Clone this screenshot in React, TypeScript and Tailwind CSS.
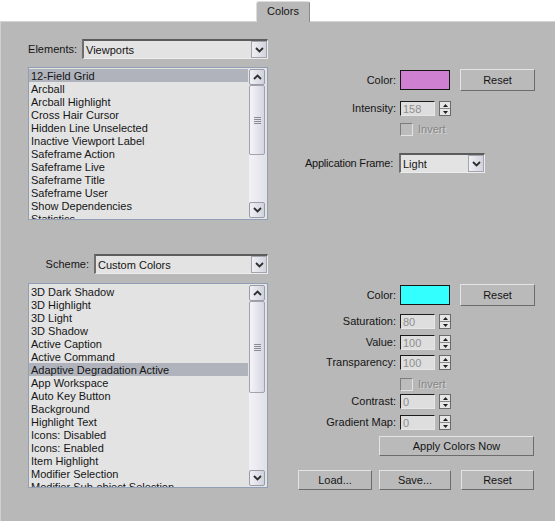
import React from 'react';

const viewportItems = [
  '12-Field Grid',
  'Arcball',
  'Arcball Highlight',
  'Cross Hair Cursor',
  'Hidden Line Unselected',
  'Inactive Viewport Label',
  'Safeframe Action',
  'Safeframe Live',
  'Safeframe Title',
  'Safeframe User',
  'Show Dependencies',
  'Statistics',
];

const schemeItems = [
  '3D Dark Shadow',
  '3D Highlight',
  '3D Light',
  '3D Shadow',
  'Active Caption',
  'Active Command',
  'Adaptive Degradation Active',
  'App Workspace',
  'Auto Key Button',
  'Background',
  'Highlight Text',
  'Icons: Disabled',
  'Icons: Enabled',
  'Item Highlight',
  'Modifier Selection',
  'Modifier Sub-object Selection',
];

function Chevron({ up = false }: { up?: boolean }) {
  return (
    <svg width="9" height="6" viewBox="0 0 9 6">
      <path
        d={up ? 'M1 5L4.5 1.5L8 5' : 'M1 1L4.5 4.5L8 1'}
        stroke="#2e2e2e"
        strokeWidth="1.8"
        fill="none"
      />
    </svg>
  );
}

function Dropdown({ value, className }: { value: string; className: string }) {
  return (
    <div
      className={`flex h-[20px] border-t-2 border-l-2 border-r border-b border-t-[#5c5c5c] border-l-[#6e6e6e] border-r-[#ececec] border-b-[#ececec] bg-[#e3e3e3] ${className}`}
    >
      <span className="flex-1 truncate pl-[2px] leading-[18px]">{value}</span>
      <span className="flex w-[16px] items-center justify-center border border-[#a4a4ae] bg-linear-to-r from-[#efeff4] to-[#d3d3de]">
        <Chevron />
      </span>
    </div>
  );
}

function ScrollBtn({ up = false }: { up?: boolean }) {
  return (
    <div className="flex h-[16px] items-center justify-center rounded-[2px] border border-[#9c9ca8] bg-linear-to-r from-[#f0f0f5] to-[#d2d2de]">
      <Chevron up={up} />
    </div>
  );
}

function ListBox({
  items,
  selected,
  height,
  thumb,
}: {
  items: string[];
  selected: number;
  height: string;
  thumb: string;
}) {
  return (
    <div className={`flex overflow-hidden border border-[#8e9fb6] bg-[#e3e3e3] ${height}`}>
      <div className="w-[219px] overflow-hidden pt-px">
        {items.map((item, i) => (
          <div
            key={item}
            className={`h-[13px] whitespace-nowrap pl-[2px] leading-[15px] ${i === selected ? 'bg-[#b0b3bc]' : ''}`}
          >
            {item}
          </div>
        ))}
      </div>
      {/* scrollbar */}
      <div className="ml-[1px] mr-[2px] flex w-[16px] flex-col py-px">
        <ScrollBtn up />
        <div className={`flex items-center justify-center rounded-[2px] border border-[#a2a2ae] bg-linear-to-r from-[#f4f4f8] to-[#d6d6e2] ${thumb}`}>
          <div className="flex flex-col gap-[1px]">
            <div className="h-px w-[7px] bg-[#8a8a94]" />
            <div className="h-px w-[7px] bg-[#8a8a94]" />
            <div className="h-px w-[7px] bg-[#8a8a94]" />
            <div className="h-px w-[7px] bg-[#8a8a94]" />
          </div>
        </div>
        <div className="flex-1 bg-linear-to-r from-[#f2f2f6] to-[#e2e2ea]" />
        <ScrollBtn />
      </div>
    </div>
  );
}

function Btn({ children, className }: { children: React.ReactNode; className: string }) {
  return (
    <div
      className={`flex items-center justify-center border border-t-[#e4e4e4] border-l-[#e4e4e4] border-r-[#6c6c6c] border-b-[#6c6c6c] bg-[#bababa] ${className}`}
    >
      {children}
    </div>
  );
}

function Spinner({ label, value, className = '' }: { label: string; value: string; className?: string }) {
  return (
    <div className={`flex h-[15px] items-center ${className}`}>
      <span className="w-[98px] text-right">{label}</span>
      <div className="ml-[4px] h-[15px] w-[35px] border-t border-l border-r border-b border-t-[#1c1c1c] border-l-[#1c1c1c] border-r-[#e6e6e6] border-b-[#e6e6e6] bg-[#dedede] pl-[2px] leading-[14px] text-[#8e8e8e]">
        {value}
      </div>
      <div className="ml-[4px] flex h-[15px] w-[12px] flex-col border border-[#6a6a6a] bg-[#e6e6e6]">
        <div className="flex flex-1 items-center justify-center border-b border-[#8a8a8a]">
          <svg width="5" height="3" viewBox="0 0 5 3">
            <path d="M0 3L2.5 0L5 3Z" fill="#1e1e1e" />
          </svg>
        </div>
        <div className="flex flex-1 items-center justify-center">
          <svg width="5" height="3" viewBox="0 0 5 3">
            <path d="M0 0L2.5 3L5 0Z" fill="#1e1e1e" />
          </svg>
        </div>
      </div>
    </div>
  );
}

function Invert({ className }: { className: string }) {
  return (
    <div className={`flex h-[13px] items-center pl-[102px] ${className}`}>
      <div className="h-[13px] w-[13px] border border-t-[#7c7c7c] border-l-[#7c7c7c] border-r-[#e2e2e2] border-b-[#e2e2e2] bg-[#bcbcbc]" />
      <span className="ml-[5px] text-[#868686] [text-shadow:1px_1px_0_#d6d6d6]">Invert</span>
    </div>
  );
}

function ColorRow({ color }: { color: string }) {
  return (
    <div className="flex h-[22px] items-center">
      <span className="w-[98px] text-right">Color:</span>
      <div className={`ml-[4px] h-[20px] w-[50px] border border-[#161616] ${color}`} />
      <Btn className="ml-[10px] h-[22px] w-[75px]">Reset</Btn>
    </div>
  );
}

export default function App() {
  return (
    <div className="flex h-[521px] w-[555px] flex-col overflow-hidden bg-white font-['Liberation_Sans',Arial,sans-serif] text-[11px] text-[#151515]">
      {/* Tab strip */}
      <div className="flex h-[22px]">
        <div className="h-px w-[256px] self-end bg-[#d4d4d4]" />
        <div className="mt-px h-[21px] w-[54px] rounded-t-[3px] border-t border-l border-r border-t-[#dcdcdc] border-l-[#dcdcdc] border-r-[#8a8a8a] bg-[#b8b8b8] text-center leading-[19px]">
          Colors
        </div>
        <div className="h-px flex-1 self-end bg-[#d4d4d4]" />
      </div>

      <div className="flex-1 border-l border-l-[#d0d0d0] bg-[#b8b8b8]">
        {/* Viewport elements */}
        <div className="flex">
          <div className="ml-[27px] w-[240px] pt-[17px]">
            <div className="flex items-center justify-end">
              <span className="mr-[5px]">Elements:</span>
              <Dropdown value="Viewports" className="w-[186px]" />
            </div>
            <div className="mt-[8px]">
              <ListBox items={viewportItems} selected={0} height="h-[153px]" thumb="h-[70px]" />
            </div>
          </div>
          <div className="ml-[30px] w-[237px] pt-[47px]">
            <ColorRow color="bg-[#d080d0]" />
            <Spinner label="Intensity:" value="158" className="mt-[10px]" />
            <Invert className="mt-[7px]" />
            <div className="mt-[17px] flex h-[20px] items-center">
              <span className="w-[95px] text-right tracking-[-0.2px]">Application Frame:</span>
              <Dropdown value="Light" className="ml-[6px] w-[86px]" />
            </div>
          </div>
        </div>

        {/* Color scheme */}
        <div className="mt-[34px] flex">
          <div className="ml-[27px] w-[240px]">
            <div className="flex items-center justify-end">
              <span className="mr-[5px]">Scheme:</span>
              <Dropdown value="Custom Colors" className="w-[174px]" />
            </div>
            <div className="mt-[9px]">
              <ListBox items={schemeItems} selected={6} height="h-[205px]" thumb="h-[92px]" />
            </div>
          </div>
          <div className="ml-[30px] w-[237px] pt-[30px]">
            <ColorRow color="bg-[#33ffff]" />
            <Spinner label="Saturation:" value="80" className="mt-[8px]" />
            <Spinner label="Value:" value="100" className="mt-[6px]" />
            <Spinner label="Transparency:" value="100" className="mt-[5px]" />
            <Invert className="mt-[8px]" />
            <Spinner label="Contrast:" value="0" className="mt-[3px]" />
            <Spinner label="Gradient Map:" value="0" className="mt-[6px]" />
            <Btn className="ml-[81px] mt-[6px] h-[20px] w-[155px]">Apply Colors Now</Btn>
            <div className="mt-[14px] flex">
              <Btn className="h-[20px] w-[74px]">Load...</Btn>
              <Btn className="ml-[7px] h-[20px] w-[72px]">Save...</Btn>
              <Btn className="ml-[10px] h-[20px] w-[73px]">Reset</Btn>
            </div>
          </div>
        </div>
      </div>
    </div>
  );
}
